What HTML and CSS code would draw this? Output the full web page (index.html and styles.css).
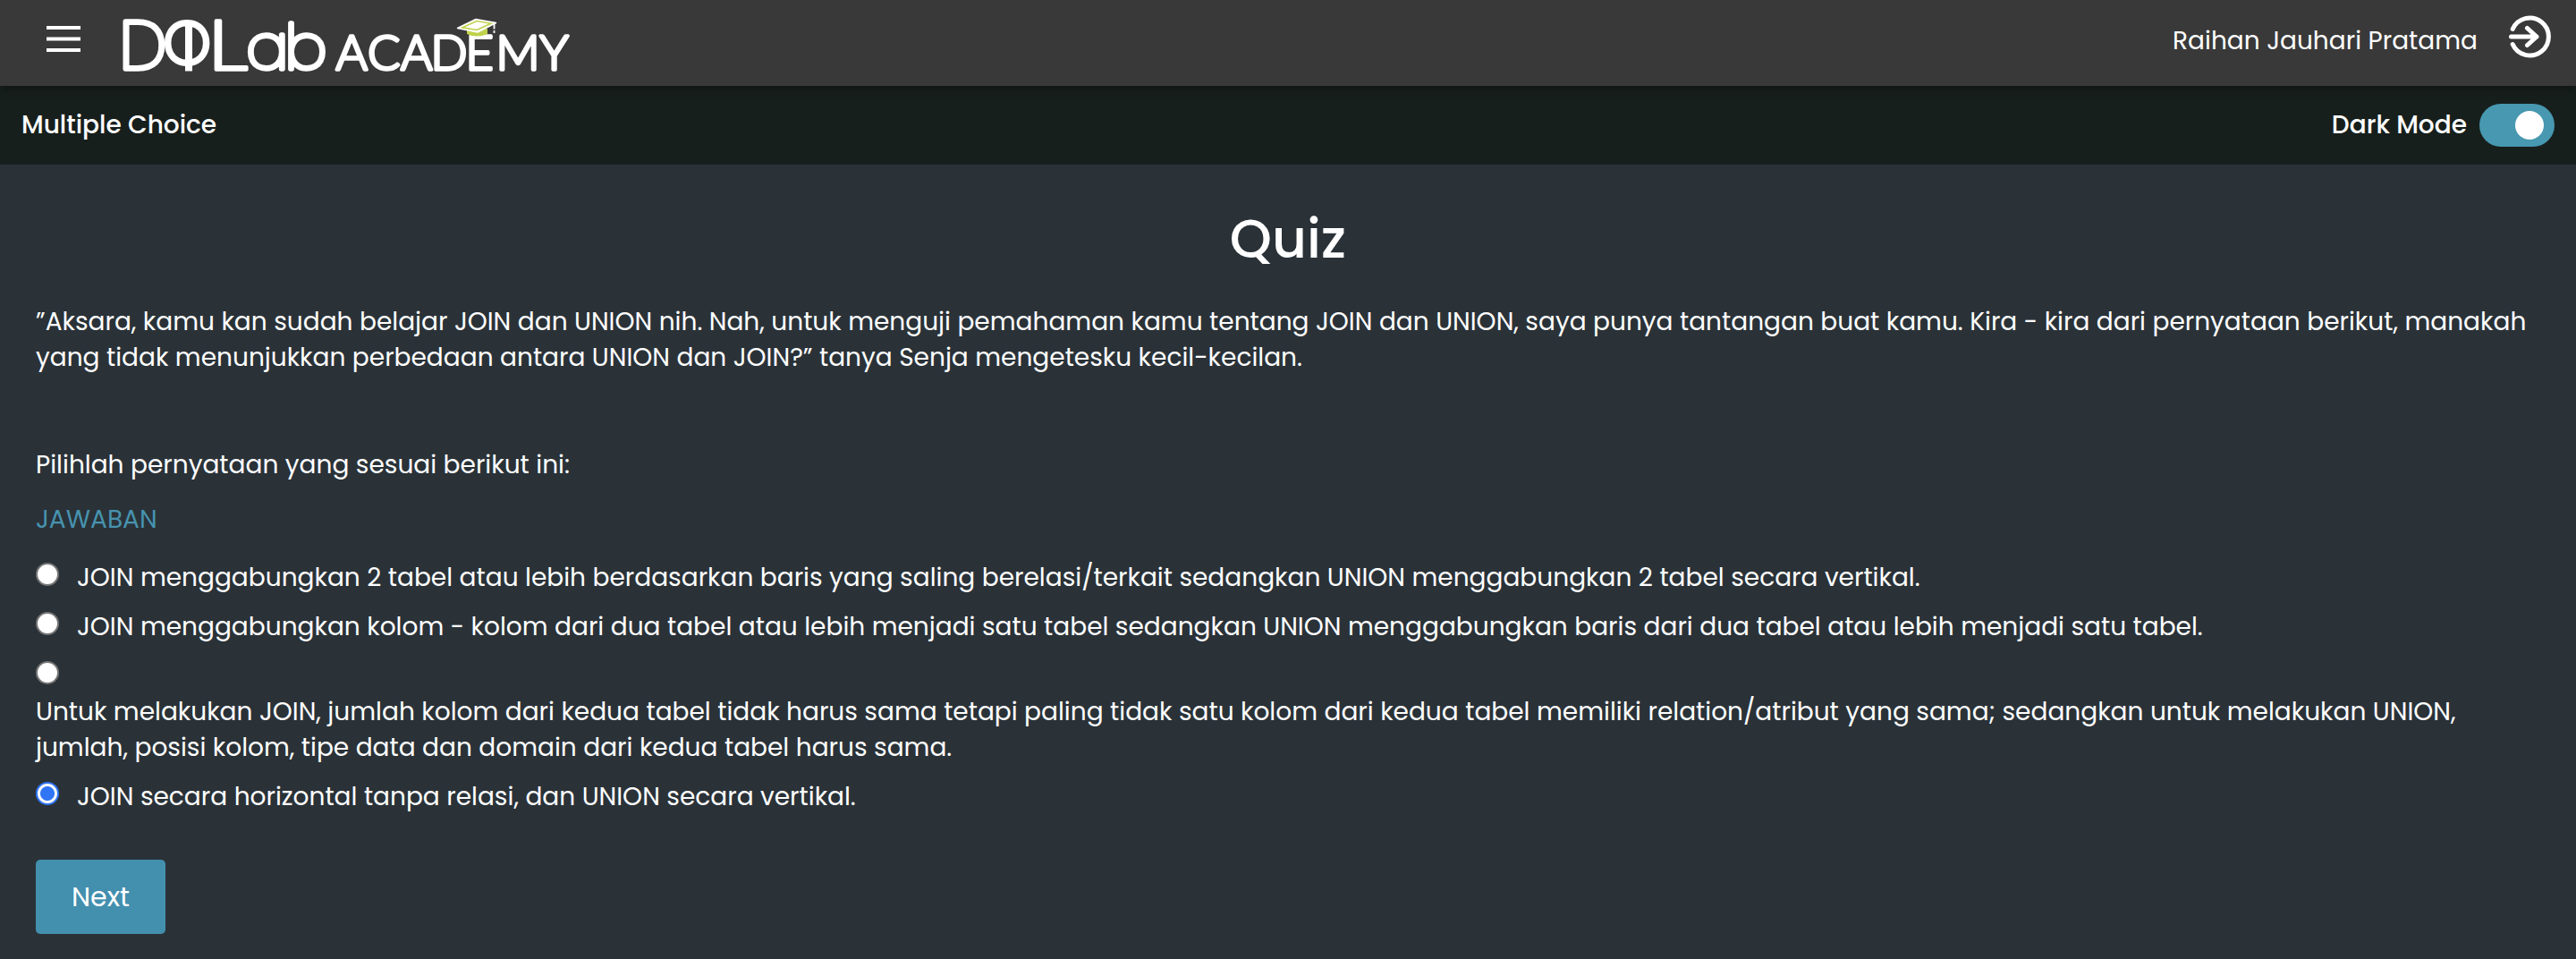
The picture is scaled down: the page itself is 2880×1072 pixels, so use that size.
FILE: index.html
```html
<!DOCTYPE html>
<html lang="id">
<head>
<meta charset="utf-8">
<title>DQLab Academy</title>
<link rel="stylesheet" href="styles.css">
</head>
<body>
<header class="topbar">
  <svg class="menu" width="38" height="30" viewBox="0 0 38 30" fill="#fff">
    <rect y="0" width="38" height="4"/><rect y="12.5" width="38" height="4"/><rect y="25" width="38" height="4"/>
  </svg>
  <svg class="logo" width="520" height="86" viewBox="130 10 520 86">
    <g fill="#fff" stroke="#fff" stroke-linejoin="round">
      <text class="brand" x="134" y="77">D</text>
      <text class="brand brand-ring" x="183" y="71">O</text>
      <text class="brand-tall" transform="translate(232.500 78) scale(1.14 1)">L</text>
      <text class="brand brand-low" x="275.500 319" y="76.500">ab</text>
      <text class="brand-sub" x="375.500 411 448 481.500 520.500 554.500 603.500" y="78">ACADEMY</text>
    </g>
    <rect x="207" y="26" width="8" height="53.5" fill="#fff"/>
    <path d="M522 33v5q11 5 23 0v-6z" fill="#c0d24c"/>
    <path d="M511.5 31.5 532 21.500 554.500 25.500 534 36z" fill="#fff" stroke="#fff" stroke-width="1.500" stroke-linejoin="round"/>
    <path d="M517 30.800 533 23.500 549 26.300 533 33.500z" fill="#fff" stroke="#c0d24c" stroke-width="1.600"/>
    <path d="M552.500 26v6.500M552.500 34v3" stroke="#fff" stroke-width="1.800"/>
  </svg>
  <div class="user">
    <span class="user-name">Raihan Jauhari Pratama</span>
    <svg width="48" height="48" viewBox="0 0 48 48" fill="none" stroke="#fff" stroke-width="5" stroke-linecap="round" stroke-linejoin="round">
      <path d="M5.200 15.500A21 21 0 1 1 5.200 32.500M3.500 24H32M21.500 14.500 32 24 21.500 33.500"/>
    </svg>
  </div>
</header>
<div class="subbar">
  <span class="section">Multiple Choice</span>
  <div class="mode"><span class="mode-label">Dark Mode</span><span class="switch"><span class="knob"></span></span></div>
</div>
<main class="quiz">
  <h1 class="title">Quiz</h1>
  <p class="question">”Aksara, kamu kan sudah belajar JOIN dan UNION nih. Nah, untuk menguji pemahaman kamu tentang JOIN dan UNION, saya punya tantangan buat kamu. Kira - kira dari pernyataan berikut, manakah yang tidak menunjukkan perbedaan antara UNION dan JOIN?” tanya Senja mengetesku kecil-kecilan.</p>
  <p class="prompt">Pilihlah pernyataan yang sesuai berikut ini:</p>
  <p class="answer-label">JAWABAN</p>
  <div class="options">
    <label class="option"><span class="radio"></span><span>JOIN menggabungkan 2 tabel atau lebih berdasarkan baris yang saling berelasi/terkait sedangkan UNION menggabungkan 2 tabel secara vertikal.</span></label>
    <label class="option"><span class="radio"></span><span>JOIN menggabungkan kolom - kolom dari dua tabel atau lebih menjadi satu tabel sedangkan UNION menggabungkan baris dari dua tabel atau lebih menjadi satu tabel.</span></label>
    <label class="option stacked"><span class="radio"></span><span>Untuk melakukan JOIN, jumlah kolom dari kedua tabel tidak harus sama tetapi paling tidak satu kolom dari kedua tabel memiliki relation/atribut yang sama; sedangkan untuk melakukan UNION, jumlah, posisi kolom, tipe data dan domain dari kedua tabel harus sama.</span></label>
    <label class="option"><span class="radio checked"></span><span>JOIN secara horizontal tanpa relasi, dan UNION secara vertikal.</span></label>
  </div>
  <button class="next">Next</button>
</main>
</body>
</html>
```
FILE: styles.css
```css
* { box-sizing: border-box; }
body {
  margin: 0;
  min-height: 1072px;
  background: #2a3238;
  color: #fff;
  font: 400 28px/40px Poppins, Inter, sans-serif;
}
p, h1 { margin: 0; }
.topbar {
  position: relative;
  display: flex;
  align-items: flex-start;
  height: 96px;
  padding: 0 28px 0 52px;
  background: #393939;
  box-shadow: 0 4px 10px rgba(0, 0, 0, .35);
}
.menu { margin-top: 29px; }
.logo { margin: 10px 0 0 40px; overflow: visible; }
.brand { font-size: 74px; font-weight: 200; stroke-width: 5.5px; }
.brand-ring { font-size: 66px; stroke-width: 6px; }
.brand-low { font-size: 69px; }
.brand-tall { font-family: Lato, sans-serif; font-size: 77px; font-weight: 300; stroke-width: 3.5px; }
.brand-sub { font-family: Lato, sans-serif; font-size: 54px; font-weight: 300; stroke-width: 3.5px; }
.user { display: flex; margin-left: auto; gap: 34px; }
.user-name { margin-top: 26px; }
.user svg { margin-top: 17px; }
.subbar {
  display: flex;
  align-items: center;
  justify-content: space-between;
  height: 88px;
  padding: 0 24px;
  background: #171f1d;
  font-weight: 500;
}
.section { padding-bottom: 1px; }
.mode { display: flex; align-items: center; gap: 14px; }
.mode-label { padding-bottom: 1px; }
.switch {
  display: flex;
  align-items: center;
  justify-content: flex-end;
  width: 84px;
  height: 48px;
  padding-right: 12px;
  border-radius: 24px;
  background: #4798b0;
}
.knob { width: 32px; height: 32px; border-radius: 50%; background: #fff; }
.quiz { padding: 50px 40px 0; }
.title {
  font-size: 60px;
  line-height: 66px;
  font-weight: 500;
  text-align: center;
}
.question { margin-top: 40px; }
.prompt { margin-top: 80px; }
.answer-label { margin-top: 21px; color: #4793af; }
.options { display: flex; flex-direction: column; gap: 15px; margin-top: 25px; }
.option { display: flex; gap: 20px; }
.stacked { flex-direction: column; gap: 0; }
.stacked .radio { margin-bottom: 11px; }
.radio {
  flex: none;
  width: 26px;
  height: 26px;
  margin-top: 3px;
  border: 2px solid #767676;
  border-radius: 50%;
  background: #fff;
}
.radio.checked {
  border-color: #3075f5;
  background: radial-gradient(circle, #3075f5 7.5px, #fff 8.5px);
}
.next {
  display: block;
  width: 145px;
  height: 83px;
  margin-top: 50px;
  padding: 0;
  border: 0;
  border-radius: 5px;
  background: #438fae;
  color: #fff;
  font: inherit;
  font-size: 30px;
}
```
